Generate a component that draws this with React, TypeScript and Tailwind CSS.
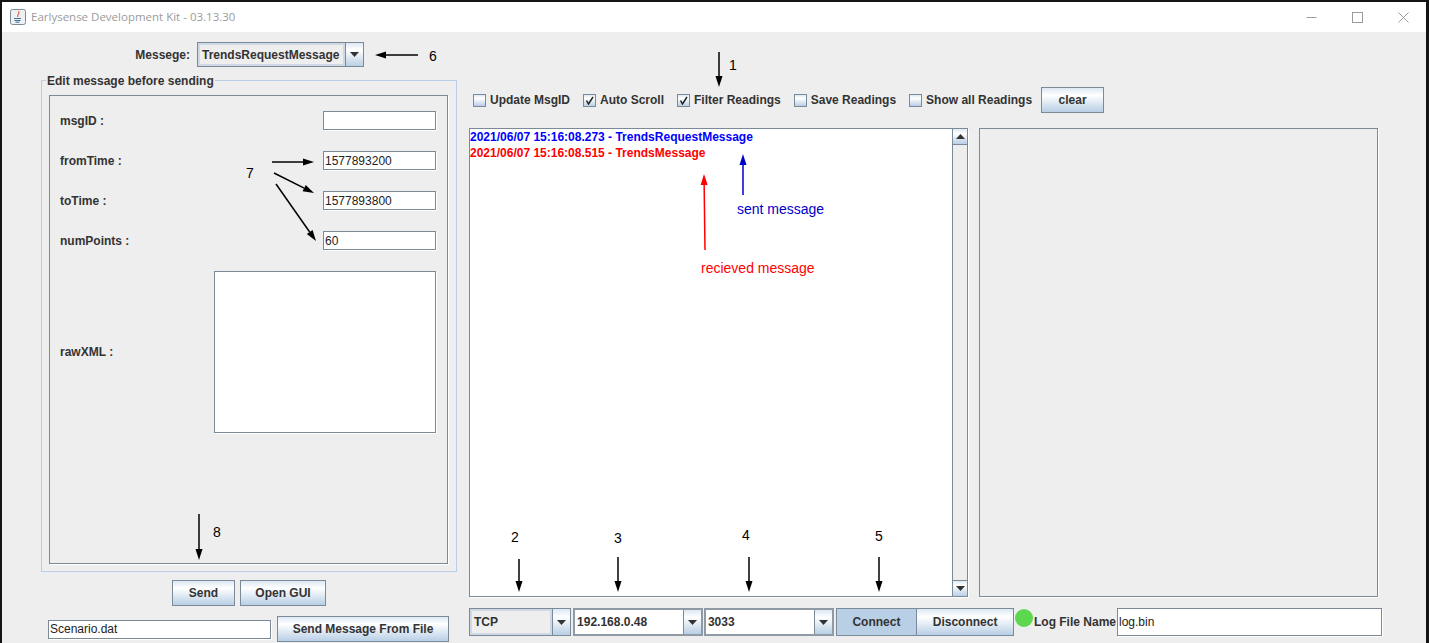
const font = "font-['Liberation_Sans',Arial,sans-serif]";
const btnFace = 'bg-[linear-gradient(180deg,#dde8f3_0%,#ffffff_30%,#b8cfe5_100%)]';

function Arrow({ x1, y1, x2, y2, color = '#000' }: { x1: number; y1: number; x2: number; y2: number; color?: string }) {
  const a = Math.atan2(y2 - y1, x2 - x1);
  const len = 11;
  const half = 3.5;
  const bx = x2 - Math.cos(a) * len;
  const by = y2 - Math.sin(a) * len;
  const nx = -Math.sin(a) * half;
  const ny = Math.cos(a) * half;
  return (
    <g>
      <line x1={x1} y1={y1} x2={bx} y2={by} stroke={color} strokeWidth={1.5} />
      <polygon points={`${x2},${y2} ${bx + nx},${by + ny} ${bx - nx},${by - ny}`} fill={color} />
    </g>
  );
}

function Button({ label, className = '', active = false }: { label: string; className?: string; active?: boolean }) {
  return (
    <div
      className={`flex items-center justify-center border border-[#7a8a99] text-[12px] font-bold text-[#333333] ${
        active ? 'bg-[#b8cfe5]' : btnFace
      } ${className}`}
    >
      {label}
    </div>
  );
}

function Caret() {
  return (
    <svg width="9" height="5" viewBox="0 0 9 5">
      <polygon points="0,0 9,0 4.5,5" fill="#333333" />
    </svg>
  );
}

function Combo({ value, className = '', editable = false }: { value: string; className?: string; editable?: boolean }) {
  return (
    <div className={`flex border border-[#7a8a99] ${className}`}>
      <div
        className={`flex min-w-0 flex-1 items-center pl-[2px] text-[12px] font-bold text-[#333333] ${
          editable ? 'bg-white' : 'border-2 border-[#ced9e4] bg-[#eeeeee]'
        }`}
      >
        {value}
      </div>
      <div className={`flex w-[18px] items-center justify-center border-l border-[#7a8a99] ${btnFace}`}>
        <Caret />
      </div>
    </div>
  );
}

function Input({ value = '', className = '' }: { value?: string; className?: string }) {
  return (
    <div
      className={`flex items-center border border-[#7a8a99] bg-white pl-[1px] text-[12px] text-[#222222] shadow-[1px_1px_0_#ffffff] ${className}`}
    >
      {value}
    </div>
  );
}

function Field({ label, value }: { label: string; value?: string }) {
  return (
    <div className="flex h-[19px] items-center justify-between">
      <span className="text-[12px] font-bold text-[#333333]">{label}</span>
      <Input value={value} className="h-[19px] w-[113px]" />
    </div>
  );
}

function Check({ label, checked = false }: { label: string; checked?: boolean }) {
  return (
    <div className="flex items-center gap-[4px]">
      <div className={`flex h-[13px] w-[13px] items-center justify-center border border-[#7a8a99] ${btnFace}`}>
        {checked && (
          <svg width="9" height="9" viewBox="0 0 9 9">
            <path d="M1.5 4.5 L3.5 8 L8 1" fill="none" stroke="#222222" strokeWidth="1.5" />
          </svg>
        )}
      </div>
      <span className="text-[12px] font-bold text-[#333333]">{label}</span>
    </div>
  );
}

function ScrollBar() {
  return (
    <div className="flex w-[15px] flex-col justify-between border-l border-[#7a8a99] bg-[#eeeeee]">
      <div className={`flex h-[16px] items-center justify-center border-b border-[#7a8a99] ${btnFace}`}>
        <svg width="9" height="5" viewBox="0 0 9 5">
          <polygon points="0,5 9,5 4.5,0" fill="#333333" />
        </svg>
      </div>
      <div className={`flex h-[16px] items-center justify-center border-t border-[#7a8a99] ${btnFace}`}>
        <Caret />
      </div>
    </div>
  );
}

function JavaIcon() {
  return (
    <svg width="16" height="16" viewBox="0 0 16 16">
      <rect x="0.5" y="0.5" width="15" height="15" rx="2" fill="#eef1f4" stroke="#7c8a96" />
      <path d="M8.5 2 C10 4.5 6.5 5.5 8 8 C7 5.5 10.5 5 8.5 2Z" fill="#d9542b" stroke="#d9542b" strokeWidth="0.6" />
      <path d="M4 9.5 H11 M4.5 11.5 H10.5 M5.5 13.2 H9.5" stroke="#3f6f94" strokeWidth="1" />
    </svg>
  );
}

function Note({ text, className }: { text: string; className: string }) {
  return <span className={`absolute text-[14px] leading-none ${className}`}>{text}</span>;
}

export default function App() {
  return (
    <div className={`relative h-[643px] w-[1429px] overflow-hidden bg-[#141414] pr-[3px] pl-[2px] pt-[2px] ${font}`}>
      <div className="flex h-full flex-col bg-[#eeeeee]">
        {/* Title bar */}
        <div className="flex h-[30px] items-center bg-white pl-[8px] pr-[17px]">
          <JavaIcon />
          <span className="ml-[5px] font-['Open_Sans',sans-serif] text-[11.5px] text-[#9b9b9b]">
            Earlysense Development Kit - 03.13.30
          </span>
          <div className="ml-auto flex items-center gap-[35px]">
            <svg width="11" height="11" viewBox="0 0 11 11">
              <path d="M0.5 5.5 H10.5" stroke="#9b9b9b" />
            </svg>
            <svg width="11" height="11" viewBox="0 0 11 11">
              <rect x="0.5" y="0.5" width="10" height="10" fill="none" stroke="#9b9b9b" />
            </svg>
            <svg width="11" height="11" viewBox="0 0 11 11">
              <path d="M0.5 0.5 L10.5 10.5 M10.5 0.5 L0.5 10.5" stroke="#9b9b9b" />
            </svg>
          </div>
        </div>

        <div className="flex flex-1 pl-[39px]">
          {/* Left column */}
          <div className="flex w-[416px] flex-col">
            <div className="mt-[10px] flex w-[323px] items-center justify-end gap-[7px]">
              <span className="text-[12px] font-bold text-[#333333]">Messege:</span>
              <Combo value="TrendsRequestMessage" className="h-[25px] w-[167px]" />
            </div>

            <div className="relative mt-[13px] h-[492px] border border-[#b8cfe5] pt-[14px] pr-[8px] pb-[7px] pl-[7px]">
              <span className="absolute -top-[7px] left-[4px] bg-[#eeeeee] px-[1px] text-[12px] font-bold leading-[14px] text-[#333333]">
                Edit message before sending
              </span>
              <div className="flex h-full flex-col gap-[21px] border border-[#7a8a99] pt-[15px] pr-[11px] pl-[10px] shadow-[1px_1px_0_#ffffff]">
                <Field label="msgID :" />
                <Field label="fromTime :" value="1577893200" />
                <Field label="toTime :" value="1577893800" />
                <Field label="numPoints :" value="60" />
                <div className="flex h-[162px] items-center justify-between">
                  <span className="text-[12px] font-bold text-[#333333]">rawXML :</span>
                  <Input className="h-[162px] w-[222px]" />
                </div>
              </div>
            </div>

            <div className="mt-[8px] ml-[131px] flex gap-[5px]">
              <Button label="Send" className="h-[26px] w-[63px]" />
              <Button label="Open GUI" className="h-[26px] w-[86px]" />
            </div>

            <div className="mt-[10px] ml-[7px] flex h-[26px] items-center gap-[6px]">
              <Input value="Scenario.dat" className="h-[19px] w-[223px]" />
              <Button label="Send Message From File" className="h-[26px] w-[172px]" />
            </div>
          </div>

          {/* Right column */}
          <div className="ml-[12px] flex flex-col">
            <div className="mt-[55px] ml-[4px] flex h-[26px] items-center gap-[13px]">
              <Check label="Update MsgID" />
              <Check label="Auto Scroll" checked />
              <Check label="Filter Readings" checked />
              <Check label="Save Readings" />
              <Check label="Show all Readings" />
              <Button label="clear" className="-ml-[4px] h-[26px] w-[63px]" />
            </div>

            <div className="mt-[15px] flex h-[469px] gap-[11px]">
              <div className="flex w-[499px] border border-[#7a8a99] bg-white shadow-[1px_1px_0_#ffffff]">
                <div className="flex-1 pl-[0px] text-[12px] font-bold leading-[16px]">
                  <div className="text-[#0000ff]">2021/06/07 15:16:08.273 - TrendsRequestMessage</div>
                  <div className="text-[#ff0000]">2021/06/07 15:16:08.515 - TrendsMessage</div>
                </div>
                <ScrollBar />
              </div>
              <div className="w-[399px] border border-[#7a8a99] bg-[#eeeeee] shadow-[1px_1px_0_#ffffff]" />
            </div>

            <div className="mt-[11px] flex h-[28px] w-[913px] items-stretch">
              <Combo value="TCP" className="w-[103px]" />
              <Combo value="192.168.0.48" editable className="ml-[2px] w-[131px] border-2 border-[#8f9aa5]" />
              <Combo value="3033" editable className="ml-[1px] w-[131px] border-2 border-[#8f9aa5]" />
              <Button label="Connect" active className="ml-[2px] w-[82px]" />
              <Button label="Disconnect" className="w-[98px] border-l-0" />
              <div className="ml-[1px] mt-[1px] h-[18px] w-[18px] rounded-full bg-[#5cd84e]" />
              <span className="ml-[1px] self-center text-[12px] font-bold whitespace-nowrap text-[#333333]">
                Log File Name
              </span>
              <Input value="log.bin" className="ml-[1px] w-[265px] shrink-0" />
            </div>
          </div>
        </div>
      </div>

      {/* Annotations drawn over the screenshot */}
      <svg className="absolute top-0 left-0" width="1429" height="643">
        <Arrow x1={719} y1={52} x2={719} y2={87} />
        <Arrow x1={418} y1={55} x2={375} y2={55} />
        <Arrow x1={272} y1={162} x2={314} y2={162} />
        <Arrow x1={274} y1={173} x2={314} y2={193} />
        <Arrow x1={276} y1={184} x2={316} y2={241} />
        <Arrow x1={199} y1={514} x2={199} y2={560} />
        <Arrow x1={519} y1={559} x2={519} y2={592} />
        <Arrow x1={618} y1={557} x2={618} y2={592} />
        <Arrow x1={749} y1={557} x2={749} y2={592} />
        <Arrow x1={879} y1={557} x2={879} y2={592} />
        <Arrow x1={705} y1={250} x2={704} y2={174} color="#ff0000" />
        <Arrow x1={743} y1={195} x2={743} y2={154} color="#0000c8" />
      </svg>
      <Note text="1" className="top-[58px] left-[729px] text-black" />
      <Note text="6" className="top-[49px] left-[429px] text-black" />
      <Note text="7" className="top-[166px] left-[246px] text-black" />
      <Note text="8" className="top-[525px] left-[213px] text-black" />
      <Note text="2" className="top-[530px] left-[511px] text-black" />
      <Note text="3" className="top-[531px] left-[614px] text-black" />
      <Note text="4" className="top-[528px] left-[742px] text-black" />
      <Note text="5" className="top-[529px] left-[875px] text-black" />
      <Note text="sent message" className="top-[202px] left-[737px] text-[#0000c8]" />
      <Note text="recieved message" className="top-[261px] left-[701px] text-[#ff0000]" />
    </div>
  );
}
